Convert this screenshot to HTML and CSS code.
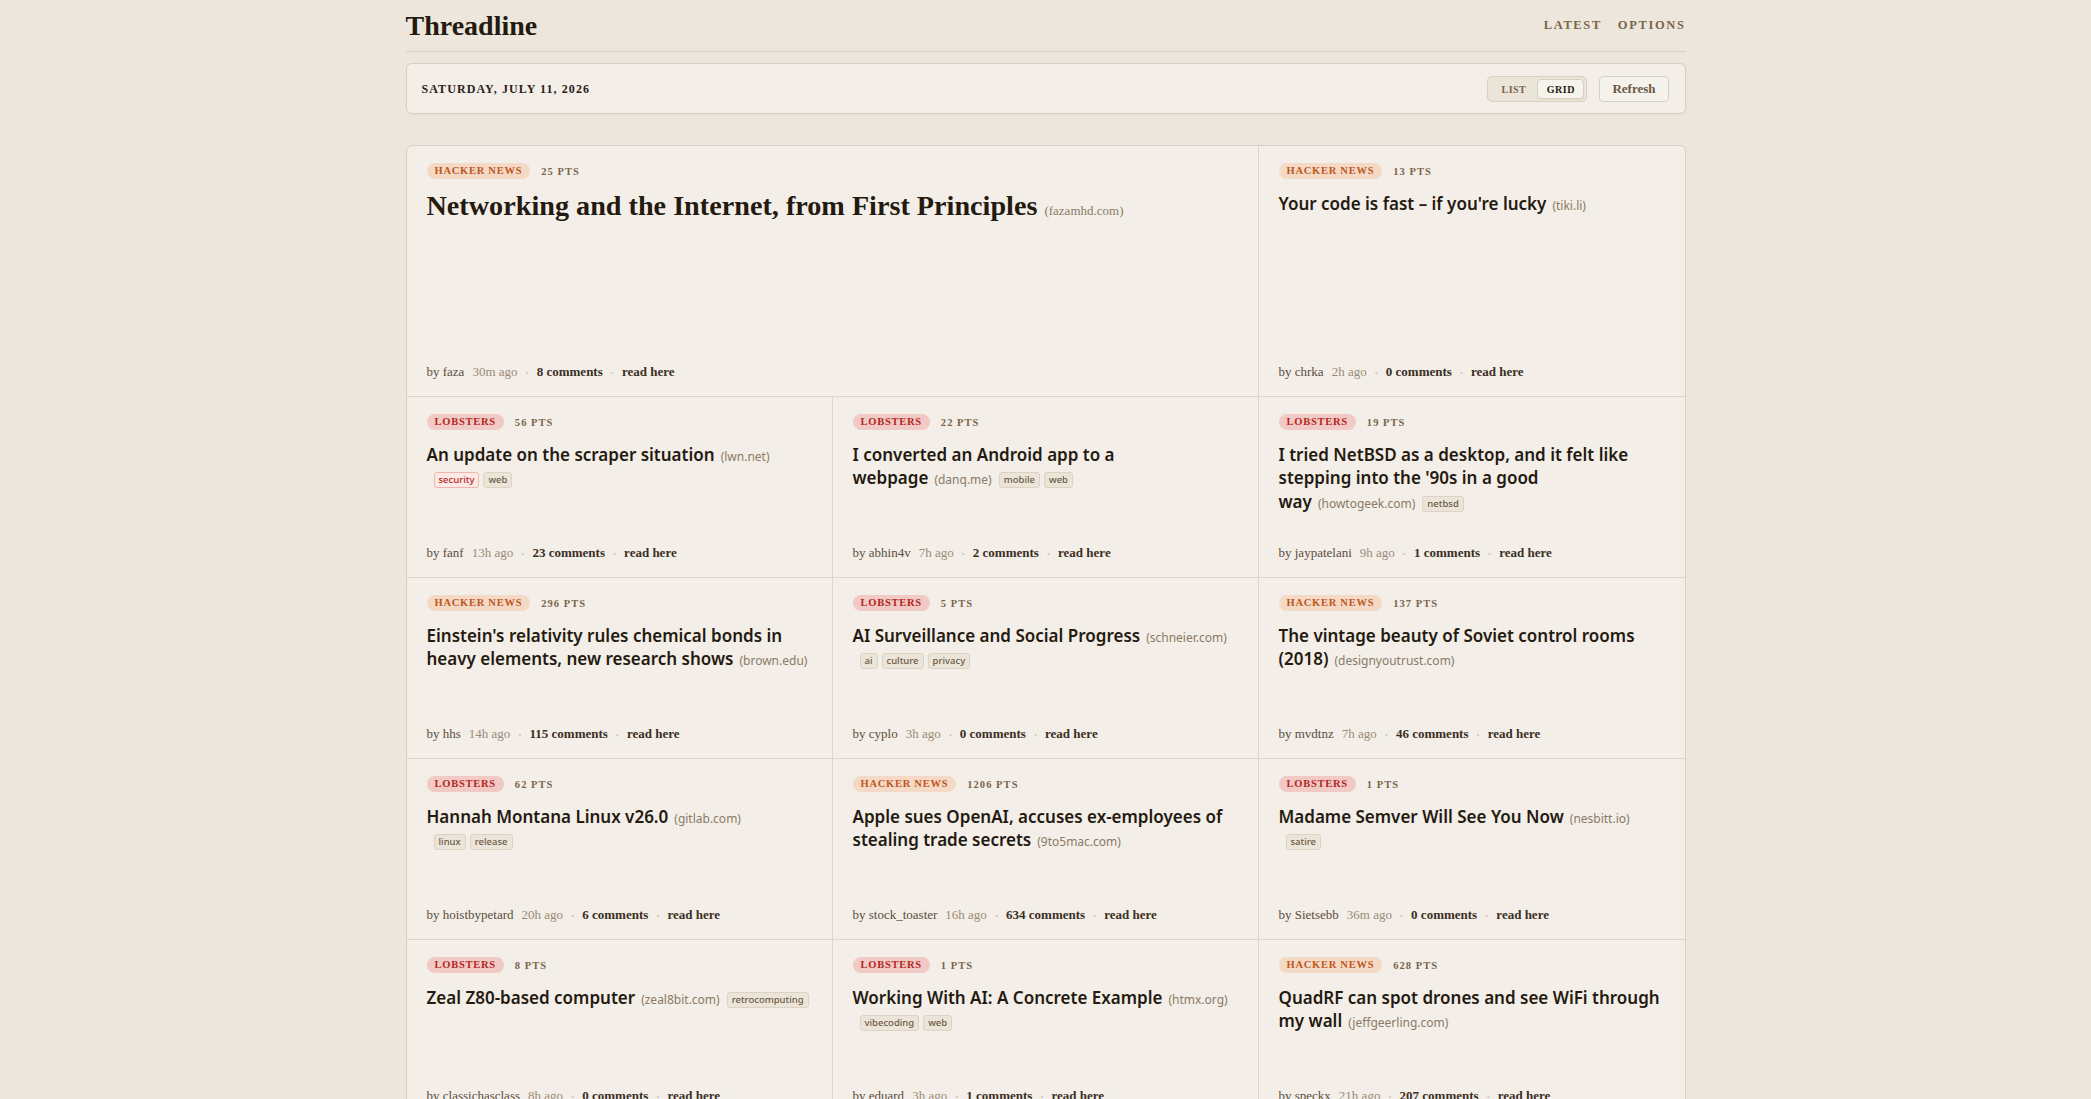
FILE: index.html
```html
<!DOCTYPE html>
<html lang="en">
<head>
    <meta charset="UTF-8">
    <meta name="viewport" content="width=device-width, initial-scale=1.0">
    <title>Threadline</title>
    <link rel="stylesheet" href="styles.css">
</head>
<body>
    <div class="page">
        <header class="masthead">
            <h1 class="logo">Threadline</h1>
            <nav class="nav">
                <a href="#">Latest</a>
                <a href="#">Options</a>
            </nav>
        </header>

        <div class="toolbar">
            <div class="date">Saturday, July 11, 2026</div>
            <div class="controls">
                <div class="toggle">
                    <button>List</button>
                    <button class="active">Grid</button>
                </div>
                <button class="refresh">Refresh</button>
            </div>
        </div>

        <main class="grid">
            <article class="card hero">
                <div class="card-head"><span class="badge hn">Hacker News</span><span class="pts">25 pts</span></div>
                <h2 class="title"><a href="#">Networking and the Internet, from First Principles</a><span class="domain">(fazamhd.com)</span></h2>
                <div class="card-foot"><span class="by">by faza</span><span class="ago">30m ago</span><span class="sep">•</span><a href="#">8 comments</a><span class="sep">•</span><a href="#">read here</a></div>
            </article>

            <article class="card">
                <div class="card-head"><span class="badge hn">Hacker News</span><span class="pts">13 pts</span></div>
                <h2 class="title"><a href="#">Your code is fast – if you're lucky</a><span class="domain">(tiki.li)</span></h2>
                <div class="card-foot"><span class="by">by chrka</span><span class="ago">2h ago</span><span class="sep">•</span><a href="#">0 comments</a><span class="sep">•</span><a href="#">read here</a></div>
            </article>

            <article class="card">
                <div class="card-head"><span class="badge lobsters">Lobsters</span><span class="pts">56 pts</span></div>
                <h2 class="title"><a href="#">An update on the scraper situation</a><span class="domain">(lwn.net)</span><span class="tags"><span class="tag hot">security</span><span class="tag">web</span></span></h2>
                <div class="card-foot"><span class="by">by fanf</span><span class="ago">13h ago</span><span class="sep">•</span><a href="#">23 comments</a><span class="sep">•</span><a href="#">read here</a></div>
            </article>

            <article class="card">
                <div class="card-head"><span class="badge lobsters">Lobsters</span><span class="pts">22 pts</span></div>
                <h2 class="title"><a href="#">I converted an Android app to a webpage</a><span class="domain">(danq.me)</span><span class="tags"><span class="tag">mobile</span><span class="tag">web</span></span></h2>
                <div class="card-foot"><span class="by">by abhin4v</span><span class="ago">7h ago</span><span class="sep">•</span><a href="#">2 comments</a><span class="sep">•</span><a href="#">read here</a></div>
            </article>

            <article class="card">
                <div class="card-head"><span class="badge lobsters">Lobsters</span><span class="pts">19 pts</span></div>
                <h2 class="title"><a href="#">I tried NetBSD as a desktop, and it felt like stepping into the '90s in a good way</a><span class="domain">(howtogeek.com)</span><span class="tags"><span class="tag">netbsd</span></span></h2>
                <div class="card-foot"><span class="by">by jaypatelani</span><span class="ago">9h ago</span><span class="sep">•</span><a href="#">1 comments</a><span class="sep">•</span><a href="#">read here</a></div>
            </article>

            <article class="card">
                <div class="card-head"><span class="badge hn">Hacker News</span><span class="pts">296 pts</span></div>
                <h2 class="title"><a href="#">Einstein's relativity rules chemical bonds in heavy elements, new research shows</a><span class="domain">(brown.edu)</span></h2>
                <div class="card-foot"><span class="by">by hhs</span><span class="ago">14h ago</span><span class="sep">•</span><a href="#">115 comments</a><span class="sep">•</span><a href="#">read here</a></div>
            </article>

            <article class="card">
                <div class="card-head"><span class="badge lobsters">Lobsters</span><span class="pts">5 pts</span></div>
                <h2 class="title"><a href="#">AI Surveillance and Social Progress</a><span class="domain">(schneier.com)</span><span class="tags"><span class="tag">ai</span><span class="tag">culture</span><span class="tag">privacy</span></span></h2>
                <div class="card-foot"><span class="by">by cyplo</span><span class="ago">3h ago</span><span class="sep">•</span><a href="#">0 comments</a><span class="sep">•</span><a href="#">read here</a></div>
            </article>

            <article class="card">
                <div class="card-head"><span class="badge hn">Hacker News</span><span class="pts">137 pts</span></div>
                <h2 class="title"><a href="#">The vintage beauty of Soviet control rooms (2018)</a><span class="domain">(designyoutrust.com)</span></h2>
                <div class="card-foot"><span class="by">by mvdtnz</span><span class="ago">7h ago</span><span class="sep">•</span><a href="#">46 comments</a><span class="sep">•</span><a href="#">read here</a></div>
            </article>

            <article class="card">
                <div class="card-head"><span class="badge lobsters">Lobsters</span><span class="pts">62 pts</span></div>
                <h2 class="title"><a href="#">Hannah Montana Linux v26.0</a><span class="domain">(gitlab.com)</span><span class="tags"><span class="tag">linux</span><span class="tag">release</span></span></h2>
                <div class="card-foot"><span class="by">by hoistbypetard</span><span class="ago">20h ago</span><span class="sep">•</span><a href="#">6 comments</a><span class="sep">•</span><a href="#">read here</a></div>
            </article>

            <article class="card">
                <div class="card-head"><span class="badge hn">Hacker News</span><span class="pts">1206 pts</span></div>
                <h2 class="title"><a href="#">Apple sues OpenAI, accuses ex-employees of stealing trade secrets</a><span class="domain">(9to5mac.com)</span></h2>
                <div class="card-foot"><span class="by">by stock_toaster</span><span class="ago">16h ago</span><span class="sep">•</span><a href="#">634 comments</a><span class="sep">•</span><a href="#">read here</a></div>
            </article>

            <article class="card">
                <div class="card-head"><span class="badge lobsters">Lobsters</span><span class="pts">1 pts</span></div>
                <h2 class="title"><a href="#">Madame Semver Will See You Now</a><span class="domain">(nesbitt.io)</span><span class="tags"><span class="tag">satire</span></span></h2>
                <div class="card-foot"><span class="by">by Sietsebb</span><span class="ago">36m ago</span><span class="sep">•</span><a href="#">0 comments</a><span class="sep">•</span><a href="#">read here</a></div>
            </article>

            <article class="card">
                <div class="card-head"><span class="badge lobsters">Lobsters</span><span class="pts">8 pts</span></div>
                <h2 class="title"><a href="#">Zeal Z80-based computer</a><span class="domain">(zeal8bit.com)</span><span class="tags"><span class="tag">retrocomputing</span></span></h2>
                <div class="card-foot"><span class="by">by classichasclass</span><span class="ago">8h ago</span><span class="sep">•</span><a href="#">0 comments</a><span class="sep">•</span><a href="#">read here</a></div>
            </article>

            <article class="card">
                <div class="card-head"><span class="badge lobsters">Lobsters</span><span class="pts">1 pts</span></div>
                <h2 class="title"><a href="#">Working With AI: A Concrete Example</a><span class="domain">(htmx.org)</span><span class="tags"><span class="tag">vibecoding</span><span class="tag">web</span></span></h2>
                <div class="card-foot"><span class="by">by eduard</span><span class="ago">3h ago</span><span class="sep">•</span><a href="#">1 comments</a><span class="sep">•</span><a href="#">read here</a></div>
            </article>

            <article class="card">
                <div class="card-head"><span class="badge hn">Hacker News</span><span class="pts">628 pts</span></div>
                <h2 class="title"><a href="#">QuadRF can spot drones and see WiFi through my wall</a><span class="domain">(jeffgeerling.com)</span></h2>
                <div class="card-foot"><span class="by">by speckx</span><span class="ago">21h ago</span><span class="sep">•</span><a href="#">207 comments</a><span class="sep">•</span><a href="#">read here</a></div>
            </article>
        </main>
    </div>
</body>
</html>
```

FILE: styles.css
```css
body {
    margin: 0;
    background-color: #ede6dc;
    font-family: "Liberation Serif", serif;
    color: #2a2118;
}
.page {
    max-width: 1280px;
    margin: 0 auto;
    padding-bottom: 40px;
}

/* header */
.masthead {
    display: flex;
    justify-content: space-between;
    align-items: center;
    height: 51px;
    border-bottom: 1px solid #d8cfc3;
}
.logo {
    margin: 0;
    font-size: 28px;
    line-height: 1;
    font-weight: 700;
    color: #241a10;
}
.nav {
    display: flex;
    gap: 16px;
}
.nav a {
    font-size: 12.5px;
    font-weight: 700;
    letter-spacing: 0.13em;
    text-transform: uppercase;
    text-decoration: none;
    color: #7a6549;
}

/* toolbar */
.toolbar {
    margin-top: 11px;
    display: flex;
    justify-content: space-between;
    align-items: center;
    padding: 12px 16px 11px 15px;
    background-color: #f3eee8;
    border: 1px solid #d8cfc3;
    border-radius: 6px;
    box-shadow: 0 1px 2px rgba(80, 60, 30, 0.05);
}
.date {
    font-size: 12px;
    font-weight: 700;
    letter-spacing: 0.09em;
    text-transform: uppercase;
    color: #2a2118;
}
.controls {
    display: flex;
    gap: 12px;
}
.toggle {
    display: flex;
    padding: 2px;
    background-color: #ebe4d9;
    border: 1px solid #d8cfc3;
    border-radius: 5px;
}
.toggle button {
    width: 47px;
    height: 20px;
    padding: 0;
    font-family: "Liberation Serif", serif;
    font-size: 10px;
    font-weight: 700;
    letter-spacing: 0.05em;
    text-transform: uppercase;
    color: #7a6549;
    background: none;
    border: 1px solid transparent;
    border-radius: 4px;
}
.toggle button.active {
    color: #241a10;
    background-color: #f6f2ec;
    border-color: #d8cfc3;
    box-shadow: 0 1px 1px rgba(80, 60, 30, 0.06);
}
.refresh {
    height: 26px;
    padding: 0 12px;
    font-family: "Liberation Serif", serif;
    font-size: 13px;
    font-weight: 700;
    color: #6b5a45;
    background-color: #f5f1eb;
    border: 1px solid #d8cfc3;
    border-radius: 4px;
}

/* grid of stories */
.grid {
    margin-top: 31px;
    display: grid;
    grid-template-columns: repeat(3, 1fr);
    background-color: #f3eee8;
    border: 1px solid #d8cfc3;
    border-radius: 6px;
    overflow: hidden;
}
.card {
    display: flex;
    flex-direction: column;
    box-sizing: border-box;
    min-height: 181px;
    padding: 17px 20px 15px;
    border-right: 1px solid #ddd5c9;
    border-bottom: 1px solid #ddd5c9;
}
.card:nth-child(3n+2) {
    border-right: none;
}
.card.hero {
    grid-column: span 2;
    min-height: 251px;
}
.card-head {
    display: flex;
    align-items: center;
    gap: 11px;
    height: 16px;
}
.badge {
    padding: 0 8px;
    font-size: 10.5px;
    font-weight: 700;
    line-height: 16px;
    letter-spacing: 0.07em;
    text-transform: uppercase;
    border-radius: 8px;
}
.badge.hn {
    color: #c0571b;
    background-color: #f4d9c6;
}
.badge.lobsters {
    color: #b3261e;
    background-color: #f1cac6;
}
.pts {
    font-size: 10.5px;
    font-weight: 700;
    letter-spacing: 0.1em;
    text-transform: uppercase;
    color: #7a6549;
}
.title {
    margin: 13px 0 0;
    font-family: "Noto Sans", sans-serif;
    font-size: 17px;
    font-weight: 600;
    line-height: 1.37;
    color: #241a10;
}
.title a {
    color: inherit;
    text-decoration: none;
}
.hero .title {
    margin-top: 10px;
    font-family: "Liberation Serif", serif;
    font-size: 28.2px;
    font-weight: 700;
    line-height: 1.2;
}
.domain {
    margin-left: 6px;
    font-size: 12px;
    font-weight: 400;
    color: #8a7a66;
}
.hero .domain {
    margin-left: 7px;
    font-size: 13px;
}
.tags {
    display: inline-flex;
    gap: 4px;
    margin-left: 7px;
    vertical-align: 1px;
}
.tag {
    padding: 0 4px;
    font-family: "Noto Sans", sans-serif;
    font-size: 9.5px;
    font-weight: 500;
    line-height: 14px;
    color: #6b5a45;
    background-color: #ebe4d8;
    border: 1px solid #dcd3c4;
    border-radius: 3px;
}
.tag.hot {
    color: #b3261e;
    background-color: #fbe9e6;
    border-color: #f0b5ae;
}
.card-foot {
    margin-top: auto;
    display: flex;
    align-items: baseline;
    gap: 8px;
    font-size: 13px;
    line-height: 16px;
}
.by {
    color: #5c4d3c;
}
.ago {
    color: #9b8b76;
}
.sep {
    font-size: 9px;
    color: #d3c9bb;
}
.card-foot a {
    font-weight: 700;
    color: #3b2f23;
    text-decoration: none;
}
```
